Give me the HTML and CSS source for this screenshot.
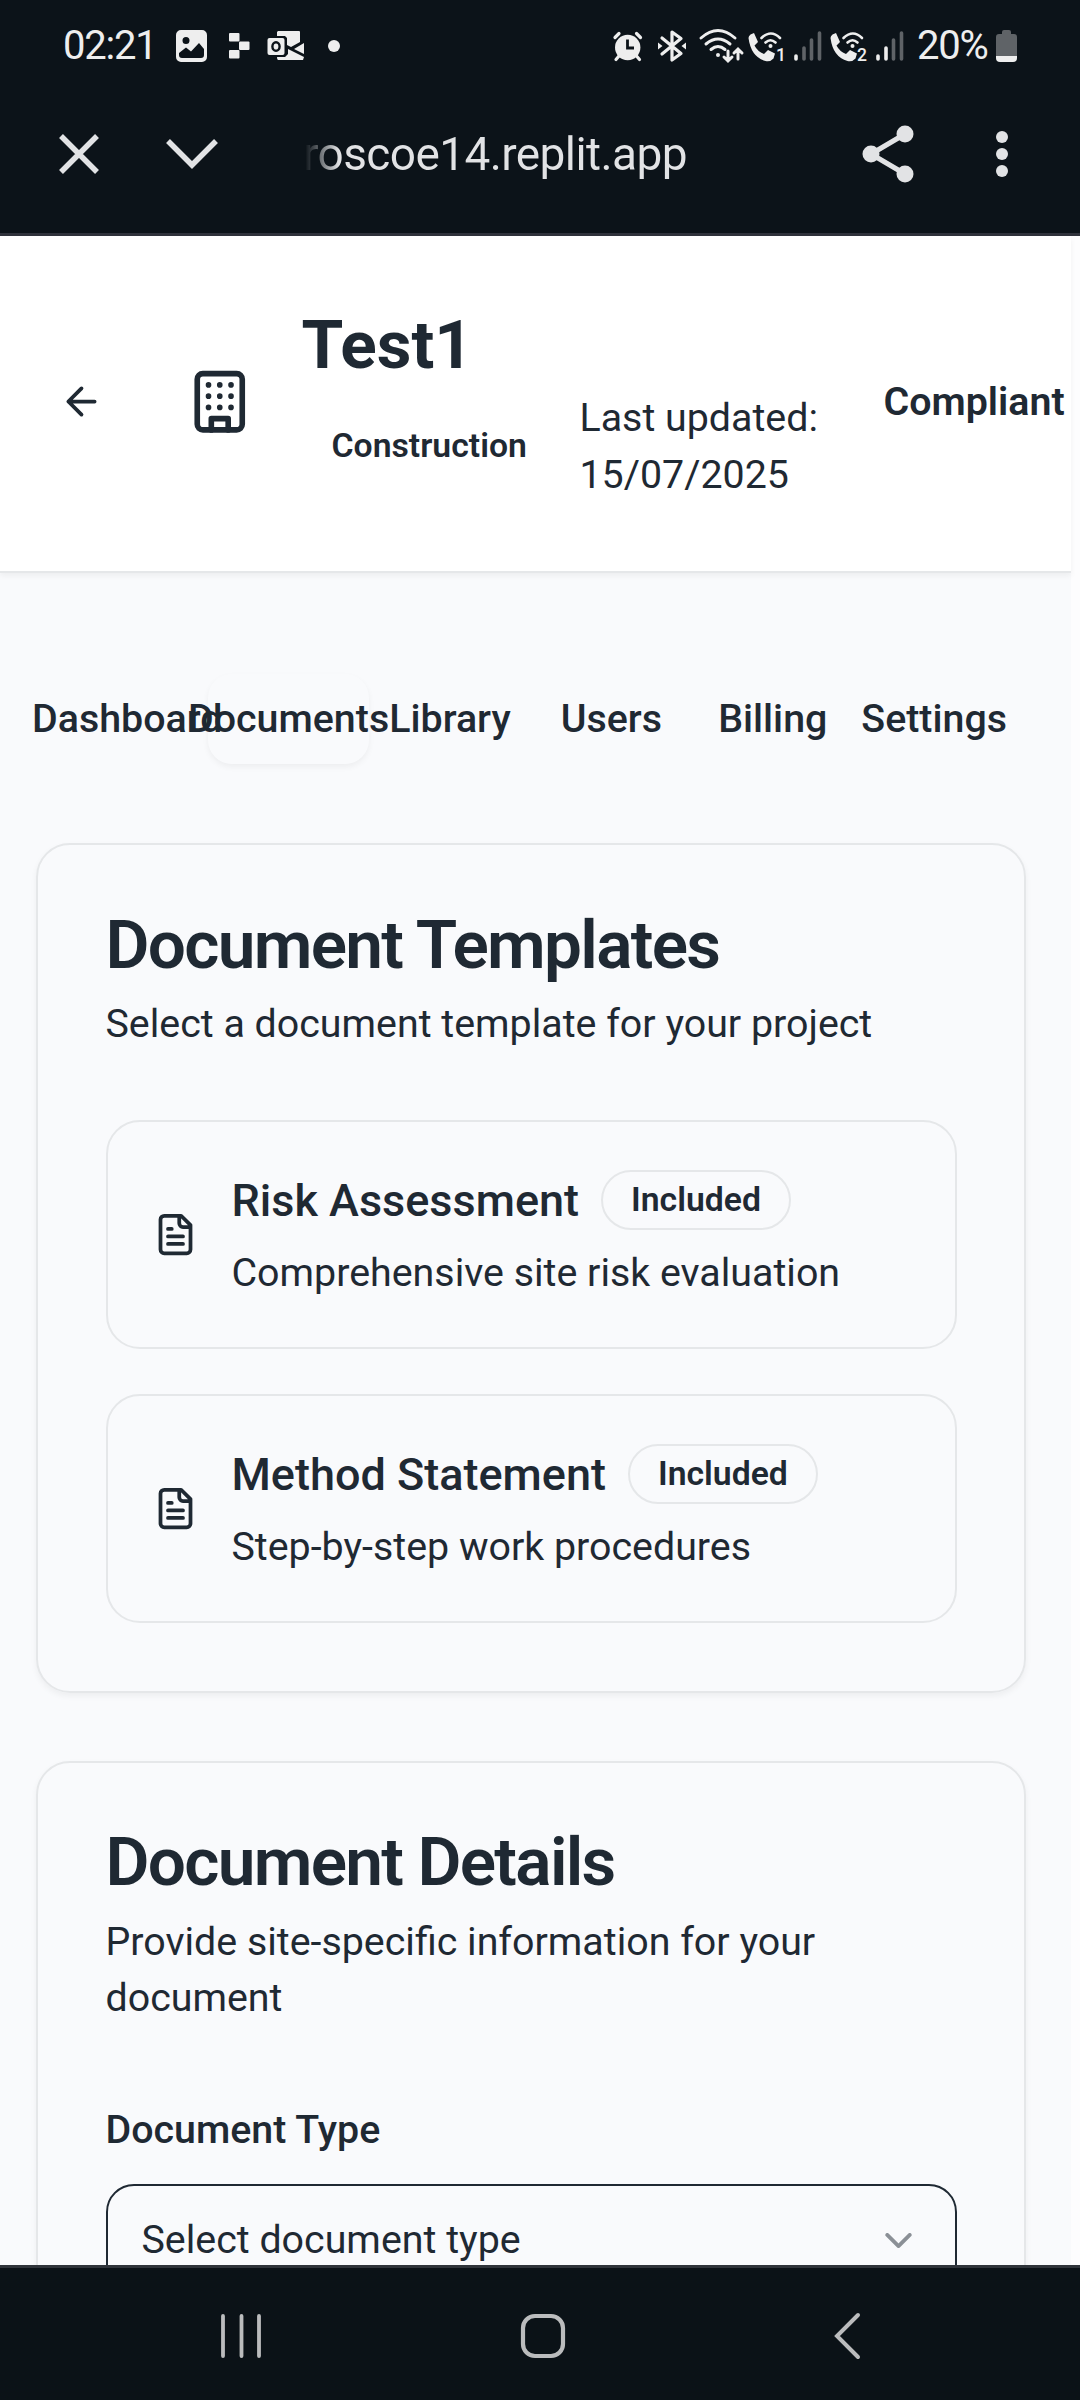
FILE: index.html
```html
<!DOCTYPE html>
<html lang="en">
<head>
<meta charset="utf-8">
<title>Test1 – Documents</title>
<link rel="stylesheet" href="styles.css">
</head>
<body>
<div class="screen">
  <div class="statusbar">
    <span class="clock">02:21</span>
    <svg class="st-image" width="32" height="32" viewBox="0 0 32 32"><path fill="#eee" fill-rule="evenodd" d="M5 0h21a5 5 0 0 1 5 5v22a5 5 0 0 1-5 5H5a5 5 0 0 1-5-5V5a5 5 0 0 1 5-5zM3 23v2q0 3 3 3h19q3 0 3-3v-6l-5-6-8 8.500-5-4zM10 7a3.500 3.500 0 1 0 0 7a3.500 3.500 0 0 0 0-7z"/></svg>
    <svg class="st-replit" width="21" height="26" viewBox="0 0 21 26" fill="#eee"><rect width="10.500" height="8.500" rx="1"/><rect x="10" y="8.500" width="10.500" height="8.500" rx="1"/><rect y="17" width="10.500" height="8.500" rx="1"/></svg>
    <svg class="st-outlook" width="38" height="30" viewBox="0 0 38 30"><path fill="#eee" d="M11 0h21q1 0 1 1v10l-9 5-4-2V7l-2-2h-8V1zM37 12v11l-10-5zM10 26h8l3-3v-5l16 8-1 3H11q-1 0-1-3z"/><rect x=".5" y="7" width="17" height="17" rx="2" fill="#eee"/><ellipse cx="9" cy="15.500" rx="3.600" ry="4.300" fill="none" stroke="#0c1319" stroke-width="2.400"/></svg>
    <svg class="st-dot" width="12" height="12" viewBox="0 0 12 12"><circle cx="6" cy="6" r="6" fill="#eee"/></svg>
    <span class="spacer"></span>
    <svg class="st-alarm" width="30" height="30" viewBox="0 0 30 30"><g stroke="#eee" stroke-width="3.200" stroke-linecap="round"><path d="M2 6.500l4-4M27.500 6.500l-4-4M6 25l-3 3.500M23.500 25l3 3.500"/></g><circle cx="14.700" cy="16.500" r="12.700" fill="#eee"/><path d="M14.500 8.500V17h6.500" stroke="#0c1319" stroke-width="2.800" fill="none"/></svg>
    <svg class="st-bt" width="28" height="32" viewBox="0 0 28 32" fill="none" stroke="#eee" stroke-width="3.200" stroke-linejoin="round" stroke-linecap="round"><path d="M4 8l19 15.500-9 6.500V2l9 6.500L4 24"/><path d="M0 12.500l4.500 3.500L0 19.500zM28 12.500L23.500 16l4.500 3.500z" fill="#eee" stroke="none"/></svg>
    <svg class="st-wifi" width="45" height="34" viewBox="0 0 45 34" fill="none" stroke="#eee" stroke-width="3" stroke-linecap="round"><path d="M2 9q17-15 34 0M7 15q12-10 24 0M12 20.500q7-6 14 0M29 22v9M25 28l4 4 4-4M39 30v-9M35 24l4-4 4 4"/><circle cx="19" cy="26" r="2" fill="#eee" stroke="none"/></svg>
    <svg class="st-call first" width="37" height="30" viewBox="0 0 37 30"><path fill="#eee" d="M.5 7q0-2 2-3.500L6 2l4 9-3.500 3.500q3 6 9.500 8.500l4-4 7 3.500-1.500 5q-3 3.500-8 2.500Q3 26 .5 7z"/><path d="M13.500 7q9.500-9 18.500 0M17.500 11.500q5-4.500 10 0" fill="none" stroke="#eee" stroke-width="2.600" stroke-linecap="round"/><circle cx="22.500" cy="15" r="2" fill="#eee"/><text x="28" y="29.500" class="sim">1</text></svg>
    <svg class="st-sig" width="28" height="30" viewBox="0 0 28 30" stroke-width="3.600" stroke-linecap="round"><path d="M2 25v3" stroke="#eee"/><path d="M10 17v11M17.500 9v19M25.500 2v26" stroke="#5f6367"/></svg>
    <svg class="st-call" width="37" height="30" viewBox="0 0 37 30"><path fill="#eee" d="M.5 7q0-2 2-3.500L6 2l4 9-3.500 3.500q3 6 9.500 8.500l4-4 7 3.500-1.500 5q-3 3.500-8 2.500Q3 26 .5 7z"/><path d="M13.500 7q9.500-9 18.500 0M17.500 11.500q5-4.500 10 0" fill="none" stroke="#eee" stroke-width="2.600" stroke-linecap="round"/><circle cx="22.500" cy="15" r="2" fill="#eee"/><text x="27" y="29.500" class="sim">2</text></svg>
    <svg class="st-sig" width="28" height="30" viewBox="0 0 28 30" stroke-width="3.600" stroke-linecap="round"><path d="M2 25v3M10 17v11" stroke="#eee"/><path d="M17.500 9v19M25.500 2v26" stroke="#5f6367"/></svg>
    <span class="percent">20%</span>
    <svg class="st-batt" width="21" height="32" viewBox="0 0 21 32"><path fill="#5f6367" d="M6 2q0-2 2-2h5q2 0 2 2v2h3q3 0 3 3v19H0V7q0-3 3-3h3z"/><path fill="#eee" d="M0 26h21v2q0 4-4 4H4q-4 0-4-4z"/></svg>
  </div>

  <div class="toolbar">
    <svg class="tb-close" width="40" height="40" viewBox="0 0 40 40"><path d="M2 2l36 36M38 2L2 38" stroke="#e2e3e5" stroke-width="5.500" fill="none"/></svg>
    <svg class="tb-down" width="52" height="30" viewBox="0 0 52 30"><path d="M2 2l24 24L50 2" stroke="#e2e3e5" stroke-width="5.500" fill="none"/></svg>
    <span class="url">roscoe14.replit.app</span>
    <svg class="tb-share" width="52" height="58" viewBox="0 0 52 58"><path d="M43 9L9 29l34 20" stroke="#e2e3e5" stroke-width="5" fill="none"/><g fill="#e2e3e5"><circle cx="43" cy="9" r="8.500"/><circle cx="9" cy="29" r="8.500"/><circle cx="43" cy="49" r="8.500"/></g></svg>
    <svg class="tb-more" width="12" height="48" viewBox="0 0 12 48" fill="#e2e3e5"><circle cx="6" cy="7" r="6"/><circle cx="6" cy="24" r="6"/><circle cx="6" cy="41" r="6"/></svg>
  </div>

  <div class="viewport">
    <div class="page">
      <header class="header">
        <svg class="icon back" viewBox="0 0 24 24"><path d="m12 19-7-7 7-7M19 12H5"/></svg>
        <svg class="icon building" viewBox="0 0 24 24"><rect width="16" height="20" x="4" y="2" rx="2"/><path d="M9 22v-4h6v4M8 6h.01M16 6h.01M12 6h.01M12 10h.01M12 14h.01M16 10h.01M16 14h.01M8 10h.01M8 14h.01"/></svg>
        <div class="project">
          <h1>Test1</h1>
          <div class="meta">
            <span class="badge plain">Construction</span>
            <span class="updated">Last updated: 15/07/2025</span>
          </div>
        </div>
        <span class="status">Compliant</span>
      </header>

      <nav class="tabs">
        <a class="tab">Dashboard</a>
        <a class="tab active">Documents</a>
        <a class="tab">Library</a>
        <a class="tab">Users</a>
        <a class="tab">Billing</a>
        <a class="tab">Settings</a>
      </nav>

      <main class="cards">
        <section class="card">
          <h2>Document Templates</h2>
          <p class="sub">Select a document template for your project</p>
          <div class="templates">
            <div class="template">
              <svg class="icon" viewBox="0 0 24 24"><path d="M15 2H6a2 2 0 0 0-2 2v16a2 2 0 0 0 2 2h12a2 2 0 0 0 2-2V7ZM14 2v4a2 2 0 0 0 2 2h4M10 9H8M16 13H8M16 17H8"/></svg>
              <div>
                <div class="template-head"><h3>Risk Assessment</h3><span class="badge">Included</span></div>
                <p>Comprehensive site risk evaluation</p>
              </div>
            </div>
            <div class="template">
              <svg class="icon" viewBox="0 0 24 24"><path d="M15 2H6a2 2 0 0 0-2 2v16a2 2 0 0 0 2 2h12a2 2 0 0 0 2-2V7ZM14 2v4a2 2 0 0 0 2 2h4M10 9H8M16 13H8M16 17H8"/></svg>
              <div>
                <div class="template-head"><h3>Method Statement</h3><span class="badge">Included</span></div>
                <p>Step-by-step work procedures</p>
              </div>
            </div>
          </div>
        </section>

        <section class="card">
          <h2>Document Details</h2>
          <p class="sub">Provide site-specific information for your document</p>
          <div class="field">
            <span class="label">Document Type</span>
            <div class="select">
              <span>Select document type</span>
              <svg class="icon chevron" viewBox="0 0 24 24"><path d="m6 9 6 6 6-6"/></svg>
            </div>
          </div>
        </section>
      </main>
    </div>
  </div>

  <div class="navbar">
    <svg width="42" height="46" viewBox="0 0 42 46"><path d="M3 3v40M21.500 3v40M39 3v40" stroke="#bbbcbd" stroke-width="3.800" stroke-linecap="round"/></svg>
    <svg class="home" width="46" height="46" viewBox="0 0 46 46"><rect x="3" y="3" width="40" height="40" rx="12" fill="none" stroke="#bbbcbd" stroke-width="4.200"/></svg>
    <svg width="30" height="48" viewBox="0 0 30 48"><path d="M26 3L5 24l21 21" fill="none" stroke="#bbbcbd" stroke-width="4" stroke-linecap="round"/></svg>
  </div>
</div>
</body>
</html>
```
FILE: styles.css
```css
* { box-sizing: border-box; }
body { margin: 0; font-family: Roboto, sans-serif; color: #1f2933; }
h1, h2, h3, p { margin: 0; }
svg { flex: none; display: block; overflow: visible; }

.screen { width: 1080px; height: 2400px; display: flex; flex-direction: column; overflow: hidden; background: #fdfdfe; }

/* system status bar */
.statusbar { flex: none; height: 91px; background: #0c1319; display: flex; align-items: center; padding: 0 63px; color: #eee; }
.clock, .percent { font-size: 40px; line-height: 46px; white-space: nowrap; }
.clock { width: 113px; letter-spacing: -1.2px; }
.percent { width: 79px; letter-spacing: -1.2px; margin-left: 13px; }
.st-replit { margin-left: 21px; }
.st-outlook { margin-left: 17px; }
.st-dot { margin-left: 23px; }
.spacer { flex: 1; }
.st-bt { margin-left: 15px; }
.st-wifi { margin-left: 13px; }
.st-call { margin-left: 8px; }
.st-call.first { margin-left: 4px; }
.st-sig { margin-left: 9px; }
.sim { font: 500 17.5px Roboto, sans-serif; fill: #eee; }

/* in-app browser toolbar */
.toolbar { flex: none; height: 145px; background: #0c1319; border-bottom: 3px solid #2f323b; display: flex; align-items: center; padding: 0 72px 16px 59px; }
.tb-down { margin-left: 67px; }
.url { margin-left: 85px; font-size: 46px; line-height: 54px; letter-spacing: -.6px; white-space: nowrap; background: linear-gradient(90deg, #0c1319 0, #0c1319 2px, #e2e3e5 36px); -webkit-background-clip: text; background-clip: text; color: transparent; }
.tb-share { margin-left: auto; }
.tb-more { margin-left: 82px; }

/* page */
.viewport { flex: 1; min-height: 0; overflow: hidden; }
.page { width: 1071px; background: #f9fafc; font-size: 39.375px; line-height: 56.25px; }
.icon { width: 45px; height: 45px; fill: none; stroke: currentColor; stroke-width: 2; stroke-linecap: round; stroke-linejoin: round; }

.header { height: 337px; padding-bottom: 4px; background: #fff; border-bottom: 2px solid #e5e7e9; box-shadow: 0 3px 6px rgba(0, 0, 0, .05); display: flex; align-items: center; padding-left: 59px; }
.building { width: 67.5px; height: 67.5px; margin-left: 82px; }
.project { margin-left: 48px; width: 532px; flex: none; }
h1 { font-size: 67.5px; line-height: 90px; font-weight: 700; }
.meta { display: flex; align-items: center; }
.badge { height: 60px; border: 2px solid #e5e7e9; border-radius: 30px; padding: 4.2px 28px 7px; font-size: 33.75px; line-height: 45px; font-weight: 600; white-space: nowrap; }
.badge.plain { border-color: transparent; width: 255px; }
.updated { margin-left: 23px; width: 250px; }
.status { margin-left: 50px; padding-top: 2px; font-weight: 600; }

.tabs { display: grid; grid-template-columns: repeat(6, 161.4px); padding: 101px 0 79px 46.5px; height: 270px; }
.tab { display: flex; align-items: center; justify-content: center; height: 90px; font-weight: 500; border-radius: 24px; }
.tab.active { box-shadow: 0 3px 6px rgba(0, 0, 0, .05); }

.cards { display: flex; flex-direction: column; gap: 67.5px; padding: 0 45px 0 36px; }
.card { border: 2px solid #e5e7e9; border-radius: 34px; padding: 65.5px 67.5px 68.5px; box-shadow: 0 3px 6px rgba(0, 0, 0, .05); }
h2 { font-size: 67.5px; line-height: 67.5px; font-weight: 600; letter-spacing: -1.69px; white-space: nowrap; }
.sub { margin-top: 17.9px; }
.templates { margin-top: 67.5px; display: flex; flex-direction: column; gap: 45px; }
.template { display: flex; align-items: center; border: 2px solid #e5e7e9; border-radius: 34px; padding: 45px; gap: 34px; }
.template-head { display: flex; align-items: center; gap: 22px; margin-bottom: 11.25px; }
h3 { font-size: 45px; line-height: 67.5px; font-weight: 500; }
.field { margin-top: 76px; display: flex; flex-direction: column; gap: 26px; }
.label { font-weight: 500; }
.select { height: 112.5px; border: 2px solid #1f2933; border-radius: 28px; padding: 0 34px; display: flex; align-items: center; justify-content: space-between; }
.chevron { opacity: .5; }

/* system navigation bar */
.navbar { flex: none; height: 135px; background: #0b1217; border-top: 3px solid #2f343a; display: flex; align-items: center; padding: 4px 0 0 220px; }
.home { margin-left: 258px; margin-right: 266px; }
```
